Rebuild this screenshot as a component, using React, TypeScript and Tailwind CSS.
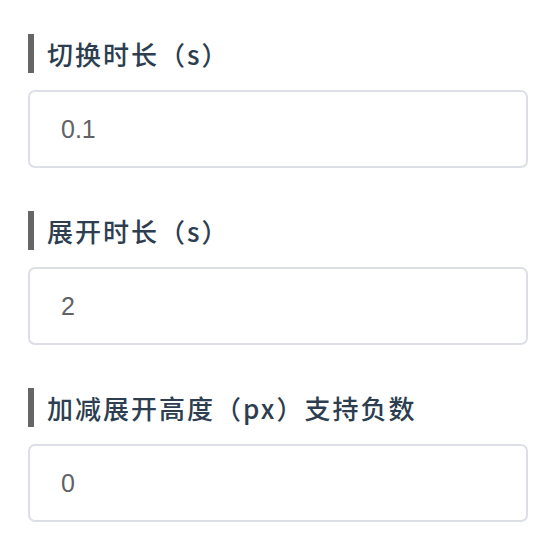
import React from "react";

const items = [
  { label: "切换时长（s）", value: "0.1" },
  { label: "展开时长（s）", value: "2" },
  { label: "加减展开高度（px）支持负数", value: "0" },
];

export default function App() {
  return (
    <div className="w-[548px] h-[546px] bg-white pt-[34px] pl-[28px] pr-[20px] flex flex-col gap-[43px]">
      {items.map((it) => (
        <div key={it.label} className="flex flex-col gap-[17px]">
          <div className="flex items-center h-[39px]">
            <div className="w-[6px] h-[39px] bg-[#666666] shrink-0" />
            <span
              className="ml-[13px] text-[26px] leading-none font-medium tracking-[2px] text-[#2c3e50] whitespace-nowrap"
              style={{ fontFamily: '"Noto Sans CJK SC", "Noto Sans", sans-serif' }}
            >
              {it.label}
            </span>
          </div>
          <input
            readOnly
            value={it.value}
            className="w-[500px] h-[78px] border-2 border-[#dcdfe6] rounded-[7px] pl-[31px] text-[25px] text-[#606266] outline-none"
            style={{ fontFamily: '"Liberation Sans", Arial, sans-serif' }}
          />
        </div>
      ))}
    </div>
  );
}
